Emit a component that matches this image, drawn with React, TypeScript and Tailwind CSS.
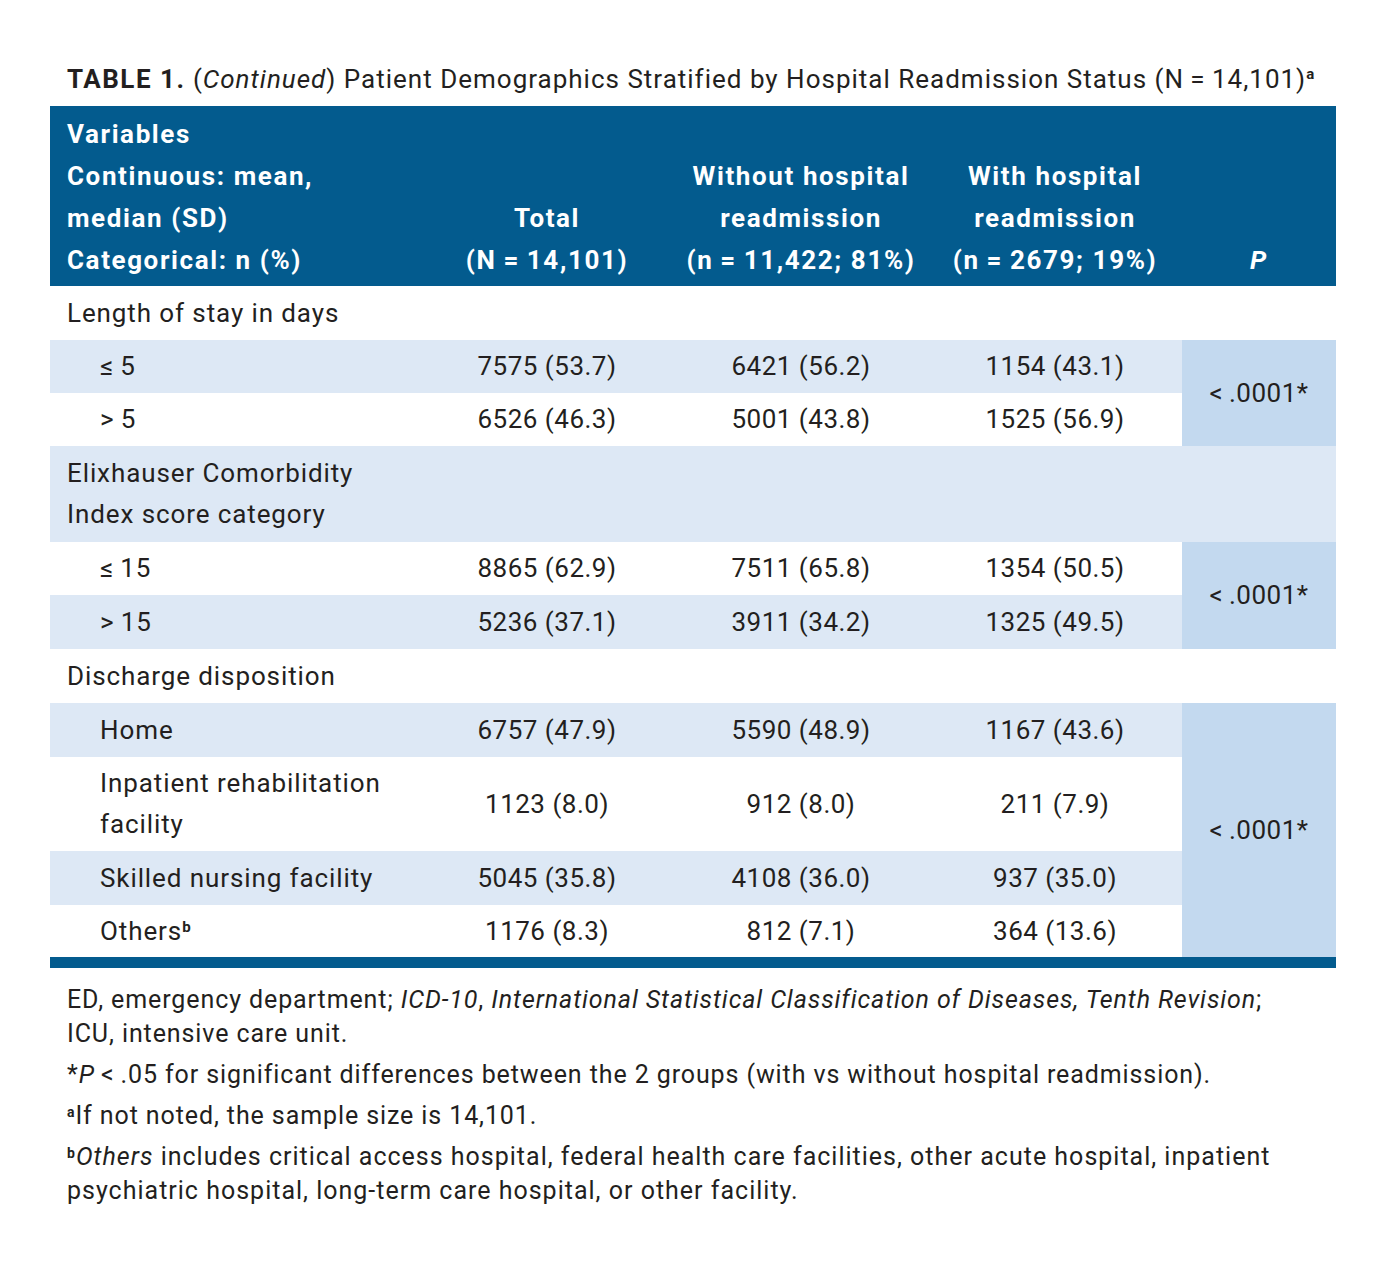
import React from 'react';

type Row = {
  label: React.ReactNode;
  kind: 'cat' | 'sub';
  h: string;
  values?: string[];
  p?: { text: string; span: number };
};

const rows: Row[] = [
  { label: 'Length of stay in days', kind: 'cat', h: 'h-[54px]' },
  { label: '≤\u20095', kind: 'sub', h: 'h-[53px]', values: ['7575 (53.7)', '6421 (56.2)', '1154 (43.1)'], p: { text: '<\u2009.0001*', span: 2 } },
  { label: '>\u20095', kind: 'sub', h: 'h-[53px]', values: ['6526 (46.3)', '5001 (43.8)', '1525 (56.9)'] },
  { label: <>Elixhauser Comorbidity<br />Index score category</>, kind: 'cat', h: 'h-[96px]' },
  { label: '≤\u200915', kind: 'sub', h: 'h-[53px]', values: ['8865 (62.9)', '7511 (65.8)', '1354 (50.5)'], p: { text: '<\u2009.0001*', span: 2 } },
  { label: '>\u200915', kind: 'sub', h: 'h-[54px]', values: ['5236 (37.1)', '3911 (34.2)', '1325 (49.5)'] },
  { label: 'Discharge disposition', kind: 'cat', h: 'h-[54px]' },
  { label: 'Home', kind: 'sub', h: 'h-[54px]', values: ['6757 (47.9)', '5590 (48.9)', '1167 (43.6)'], p: { text: '<\u2009.0001*', span: 4 } },
  { label: <>Inpatient rehabilitation<br />facility</>, kind: 'sub', h: 'h-[94px]', values: ['1123 (8.0)', '912 (8.0)', '211 (7.9)'] },
  { label: 'Skilled nursing facility', kind: 'sub', h: 'h-[54px]', values: ['5045 (35.8)', '4108 (36.0)', '937 (35.0)'] },
  { label: <>Others<span className="relative -top-[8px] text-[15px] leading-none font-bold">b</span></>, kind: 'sub', h: 'h-[52px]', values: ['1176 (8.3)', '812 (7.1)', '364 (13.6)'] },
];

export default function App() {
  return (
    <div className="min-h-[1268px] w-[1386px] bg-white pt-[61px] font-['Roboto',sans-serif] text-[#231f20]">
      <div className="mx-[50px] w-[1286px]">
        <h1 className="mb-[9px] whitespace-nowrap px-[17px] text-[26px] leading-[36px] tracking-[1px]">
          <span className="font-bold tracking-[1.5px]">TABLE 1.</span> (<i>Continued</i>) Patient Demographics Stratified by Hospital Readmission Status (N{'\u2009'}={'\u2009'}14,101)
          <span className="relative -top-[9px] text-[15px] leading-none font-bold">a</span>
        </h1>

        <table className="w-[1286px] table-fixed border-collapse text-[26px] leading-[41px] tracking-[0.9px]">
          <colgroup>
            <col className="w-[370px]" />
            <col className="w-[254px]" />
            <col className="w-[254px]" />
            <col className="w-[254px]" />
            <col className="w-[154px]" />
          </colgroup>
          <thead>
            <tr className="h-[180px] bg-[#035b8e] font-bold leading-[42px] tracking-[1.6px] text-white">
              <th className="pl-[17px] pt-[7px] pb-[5px] text-left align-bottom">
                Variables<br />Continuous: mean,<br />median (SD)<br />Categorical: n (%)
              </th>
              <th className="pb-[5px] text-center align-bottom">
                Total<br />(N{'\u2009'}={'\u2009'}14,101)
              </th>
              <th className="pb-[5px] text-center align-bottom">
                Without hospital<br />readmission<br />(n{'\u2009'}={'\u2009'}11,422; 81%)
              </th>
              <th className="pb-[5px] text-center align-bottom">
                With hospital<br />readmission<br />(n{'\u2009'}={'\u2009'}2679; 19%)
              </th>
              <th className="pb-[5px] text-center align-bottom italic">P</th>
            </tr>
          </thead>
          <tbody>
            {rows.map((r, i) => {
              const bg = i % 2 === 1 ? 'bg-[#dde8f5]' : 'bg-white';
              if (r.kind === 'cat') {
                return (
                  <tr key={i} className={`${bg} ${r.h}`}>
                    <td colSpan={5} className="p-0 pl-[17px] align-middle">{r.label}</td>
                  </tr>
                );
              }
              return (
                <tr key={i} className={`${bg} ${r.h}`}>
                  <td className="p-0 pl-[50px] align-middle">{r.label}</td>
                  {r.values!.map((v, j) => (
                    <td key={j} className="p-0 text-center align-middle tracking-[0.5px]">{v}</td>
                  ))}
                  {r.p && (
                    <td rowSpan={r.p.span} className="bg-[#c3d9ef] p-0 text-center align-middle tracking-[0.5px]">
                      {r.p.text}
                    </td>
                  )}
                </tr>
              );
            })}
          </tbody>
        </table>
        <div className="h-[11px] bg-[#035b8e]" />

        <div className="mt-[15px] flex flex-col gap-[7px] px-[17px] text-[25px] leading-[34px] tracking-[0.9px]">
          <p>
            ED, emergency department; <i>ICD-10</i>, <i>International Statistical Classification of Diseases, Tenth Revision</i>;
            <br />
            ICU, intensive care unit.
          </p>
          <p>
            *<i>P</i>{'\u2009'}&lt;{'\u2009'}.05 for significant differences between the 2 groups (with vs without hospital readmission).
          </p>
          <p>
            <span className="relative -top-[7px] text-[14px] leading-none font-bold">a</span>If not noted, the sample size is 14,101.
          </p>
          <p className="tracking-[1px]">
            <span className="relative -top-[7px] text-[14px] leading-none font-bold">b</span><i>Others</i> includes critical access hospital, federal health care facilities, other acute hospital, inpatient
            <br />
            psychiatric hospital, long-term care hospital, or other facility.
          </p>
        </div>
      </div>
    </div>
  );
}
